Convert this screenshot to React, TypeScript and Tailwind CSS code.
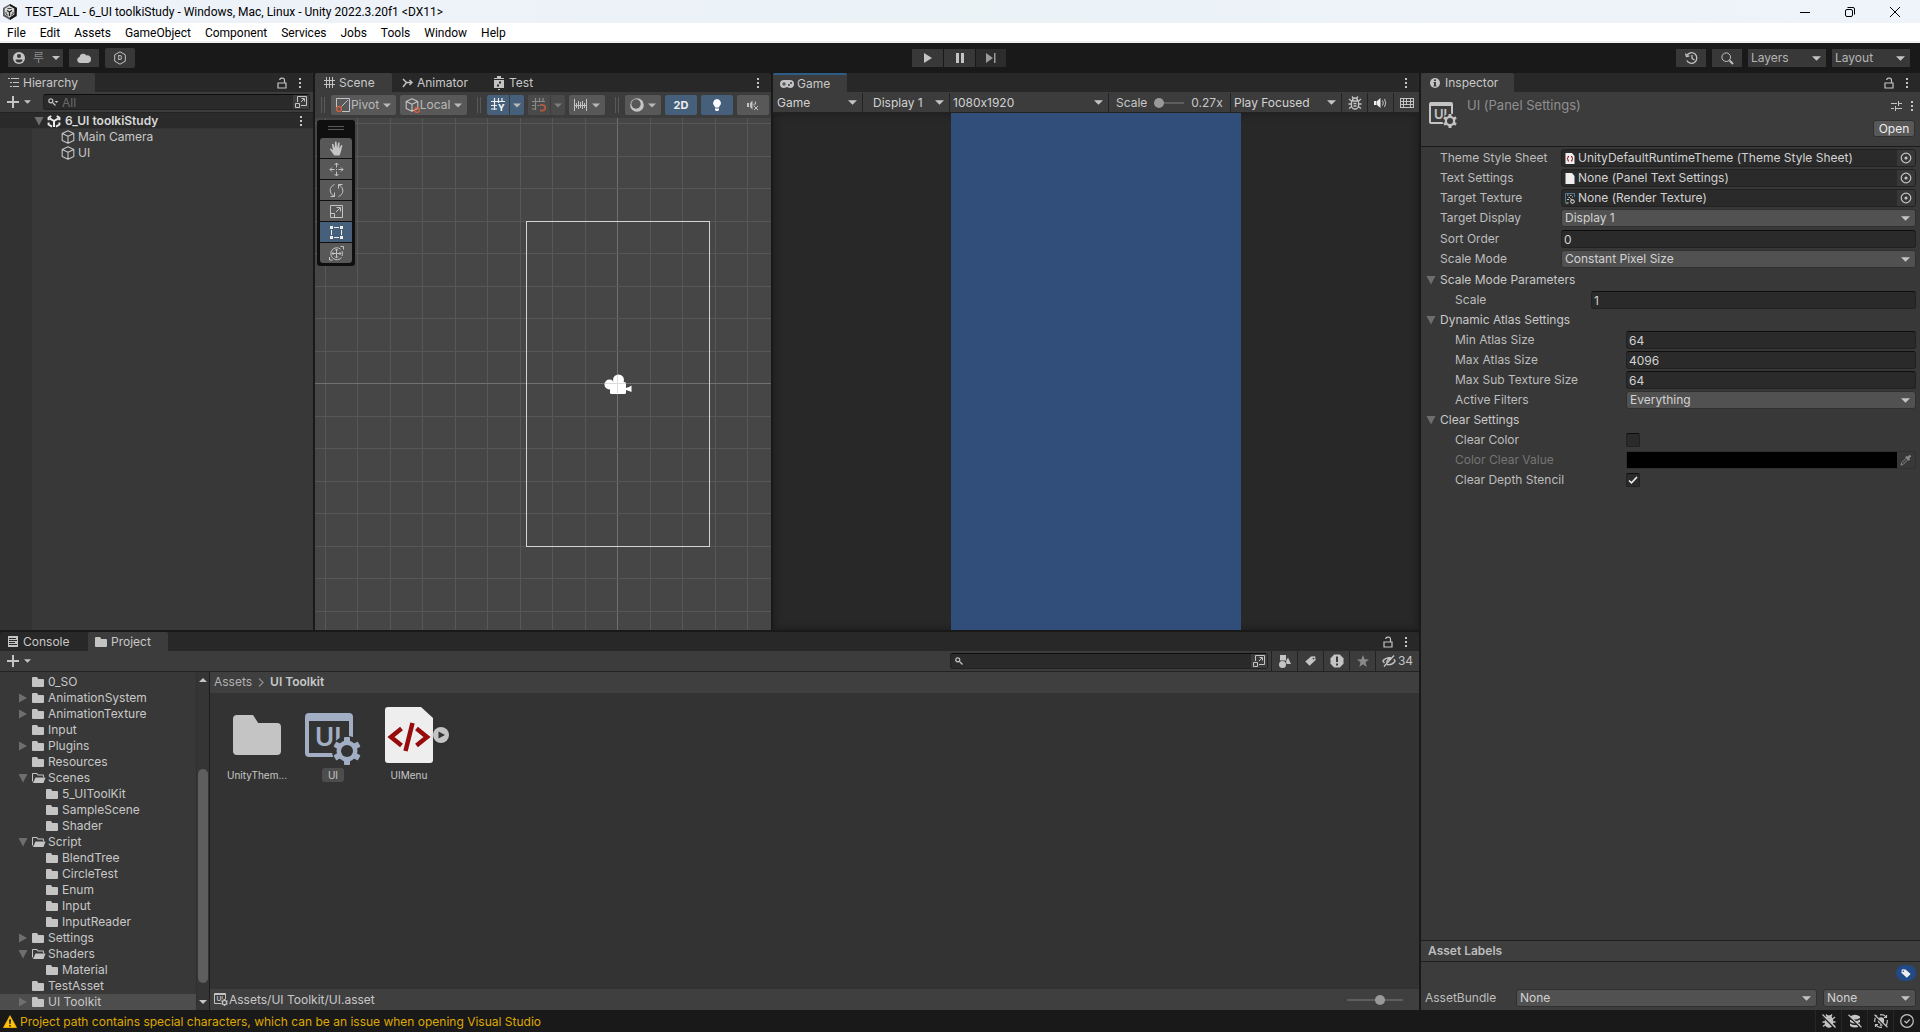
import React, { useState } from 'react'
import clsx from 'clsx'

interface IconProps {
  className?: string
}

interface DropdownProps {
  label?: string
  id?: string
  options: string[]
  className?: string
  selectClassName?: string
}

interface TabProps {
  icon: React.ReactNode
  text: string
  active?: boolean
  className?: string
}

interface TreeItem {
  name: string
  depth: number
  state?: 'open' | 'closed'
}

const menus = [
  'File',
  'Edit',
  'Assets',
  'GameObject',
  'Component',
  'Services',
  'Jobs',
  'Tools',
  'Window',
  'Help',
]

const folders: TreeItem[] = [
  { name: '0_SO', depth: 0 },
  { name: 'AnimationSystem', depth: 0, state: 'closed' },
  { name: 'AnimationTexture', depth: 0, state: 'closed' },
  { name: 'Input', depth: 0 },
  { name: 'Plugins', depth: 0, state: 'closed' },
  { name: 'Resources', depth: 0 },
  { name: 'Scenes', depth: 0, state: 'open' },
  { name: '5_UIToolKit', depth: 1 },
  { name: 'SampleScene', depth: 1 },
  { name: 'Shader', depth: 1 },
  { name: 'Script', depth: 0, state: 'open' },
  { name: 'BlendTree', depth: 1 },
  { name: 'CircleTest', depth: 1 },
  { name: 'Enum', depth: 1 },
  { name: 'Input', depth: 1 },
  { name: 'InputReader', depth: 1 },
  { name: 'Settings', depth: 0, state: 'closed' },
  { name: 'Shaders', depth: 0, state: 'open' },
  { name: 'Material', depth: 1 },
  { name: 'TestAsset', depth: 0 },
  { name: 'UI Toolkit', depth: 0, state: 'closed' },
]

/* ---------- icons ---------- */

function Caret({ className = 'h-1 w-2' }: IconProps) {
  return (
    <svg viewBox="0 0 8 4" className={clsx('shrink-0', className)} fill="currentColor">
      <path d="M0 0h8L4 4z" />
    </svg>
  )
}

function Foldout({ open }: { open: boolean }) {
  return (
    <svg viewBox="0 0 10 10" className="h-[10px] w-[10px] shrink-0 fill-[#6e6e6e]">
      <path d={open ? 'M0.5 1h9L5 9.500z' : 'M1 0.500v9L9 5z'} />
    </svg>
  )
}

function Dots() {
  return (
    <svg viewBox="0 0 4 12" className="h-3 w-1 fill-[#c4c4c4]" shapeRendering="crispEdges">
      <path d="M1 1h2v2H1zM1 5h2v2H1zM1 9h2v2H1z" />
    </svg>
  )
}

function Lock() {
  return (
    <svg viewBox="0 0 10 12" className="h-3 w-[10px]" fill="none" stroke="#c4c4c4" strokeWidth="1.200">
      <path d="M1 6h8v5H1zM7.500 6V3.200A2 2 0 0 0 5.500 1.200h-1A1.800 1.800 0 0 0 2.700 3" />
    </svg>
  )
}

function Plus() {
  return (
    <svg viewBox="0 0 12 12" className="h-3 w-3 fill-[#c4c4c4]" shapeRendering="crispEdges">
      <path d="M5 0h2v5h5v2H7v5H5V7H0V5h5z" />
    </svg>
  )
}

function FolderIcon({ className = 'h-[10px] w-3' }: IconProps) {
  return (
    <svg viewBox="0 0 12 10" className={clsx('shrink-0 fill-[#c4c4c4]', className)}>
      <path d="M0 1a1 1 0 0 1 1-1h4l1.300 2H11a1 1 0 0 1 1 1v6a1 1 0 0 1-1 1H1a1 1 0 0 1-1-1z" />
    </svg>
  )
}

function FolderOpenIcon() {
  return (
    <svg viewBox="0 0 14 10" className="h-[10px] w-[14px] shrink-0 fill-[#c4c4c4]">
      <path d="M0 1a1 1 0 0 1 1-1h4l1.300 1.500H11a1 1 0 0 1 1 1V4h-1V2.500H5.800L4.500 1H1v7L0 9z" />
      <path d="M3.500 4.500H13.500L11.500 10H1z" />
    </svg>
  )
}

function CubeIcon({ className = 'h-[14px] w-[14px]' }: IconProps) {
  return (
    <svg viewBox="0 0 14 14" className={clsx('shrink-0', className)} fill="none" stroke="#c4c4c4" strokeWidth="1.100" strokeLinejoin="round">
      <path d="M7 0.800l5.800 2.700v7L7 13.300 1.200 10.500v-7zM1.200 3.500L7 6.300l5.800-2.800M7 6.300v7" />
    </svg>
  )
}

function UnityIcon() {
  return (
    <svg viewBox="0 0 14 14" className="h-[14px] w-[14px] shrink-0" fill="none" stroke="#ececec" strokeWidth="2">
      <path d="M4.200 2L1.600 3.700v2.500M9.800 2l2.600 1.700v2.500M1.600 8.500v2L5 12.600M12.400 8.500v2L9 12.600" />
      <path d="M7 7v6M7 7L2.500 4.300M7 7l4.500-2.700" />
    </svg>
  )
}

function AppIcon() {
  return (
    <svg viewBox="0 0 16 16" className="h-4 w-4">
      <path d="M8 0l7 4v8l-7 4-7-4V4z" fill="#5a5a5a" />
      <path d="M8 0l7 4-1 8-6 4z" fill="#161616" />
      <path d="M7.500 1.800l4.800 2.700v6L7.500 13.500 2.700 10.500v-6z" fill="#d6d6d6" />
      <path d="M7.500 8v4M7.500 8L5 6.500M7.500 8L10 6.500" stroke="#222" strokeWidth="1.300" />
      <path d="M4 8v2l2 1.300M11 8v2l-2 1.300M5.500 4.500h4" stroke="#444" fill="none" />
    </svg>
  )
}

/* window frame with the two letters and a gear over its lower right corner */
function PanelSettingsIcon({ className, color, back }: { className: string; color: string; back: string }) {
  return (
    <svg viewBox="0 0 56 52" className={clsx('shrink-0', className)}>
      <path
        d="M4 0h40a4 4 0 0 1 4 4v36a4 4 0 0 1-4 4H4a4 4 0 0 1-4-4V4a4 4 0 0 1 4-4zM4 8v32h40V8z"
        fill={color}
        fillRule="evenodd"
      />
      <text x="10" y="33" fontSize="26" fontWeight="600" fontFamily="Inter, sans-serif" fill={color}>
        UI
      </text>
      <g transform="translate(42 38)">
        <circle r="15" fill={back} />
        {[0, 60, 120].map((a) => (
          <rect key={a} x="-3" y="-14" width="6" height="28" rx="1" fill={color} transform={`rotate(${a})`} />
        ))}
        <circle r="10.500" fill={color} />
        <circle r="6" fill={back} />
      </g>
    </svg>
  )
}

function PopOutIcon() {
  return (
    <svg viewBox="0 0 12 12" className="h-3 w-3" fill="none" stroke="#c4c4c4">
      <path d="M2.500 6V0.500h9v9H6M6 6l3-3M6.500 2.500h3v3M0.500 7.500h4v4h-4z" />
    </svg>
  )
}

function TagIcon({ className = 'h-[10px] w-[11px]' }: IconProps) {
  return (
    <svg viewBox="0 0 12 11" className={className} fill="currentColor">
      <path fillRule="evenodd" d="M6.500 0.500L11 0.300l0.700 4.200L5 10.800 0.300 6zM9.300 1.800a1 1 0 1 0 .01 2 1 1 0 0 0 0-2z" />
    </svg>
  )
}

function BugIcon({ off }: { off?: boolean }) {
  return (
    <svg viewBox="0 0 14 14" className="h-[14px] w-[14px]" fill="none" stroke="#c4c4c4" strokeWidth="1.300">
      <path
        d="M4.500 4.500a2.500 2.500 0 0 1 5 0M3.500 5h7v4.500a3.500 3.500 0 0 1-7 0zM3.500 8H0.500M10.500 8h3M3.500 5L1 3M10.500 5L13 3M3.500 10.500L1 12.500M10.500 10.500l2.500 2M4 0.500l1.500 2M10 0.500l-1.500 2M5.500 7.500h3M5.500 10h3"
        fill={off ? '#c4c4c4' : 'none'}
      />
      {off && <path d="M0.500 2l13 13" stroke="#191919" strokeWidth="1.800" />}
      {off && <path d="M0.500 0.500l13 13" />}
    </svg>
  )
}

function TargetIcon() {
  return (
    <svg viewBox="0 0 12 12" className="h-3 w-3" fill="none" stroke="#c4c4c4" strokeWidth="1.200">
      <circle cx="6" cy="6" r="4.800" />
      <circle cx="6" cy="6" r="1.600" fill="#c4c4c4" stroke="none" />
    </svg>
  )
}

/* ---------- shared parts ---------- */

function Dropdown({ label, id, options, className, selectClassName }: DropdownProps) {
  return (
    <div className={clsx('relative flex items-center text-[#d2d2d2]', className)}>
      <select
        id={id}
        aria-label={label}
        className={clsx('h-full w-full appearance-none truncate bg-transparent outline-none', selectClassName)}
      >
        {options.map((o) => (
          <option key={o}>{o}</option>
        ))}
      </select>
      <Caret className="pointer-events-none absolute right-[5px] h-[5px] w-[9px] text-[#c4c4c4]" />
    </div>
  )
}

function Tab({ icon, text, active, className }: TabProps) {
  return (
    <button
      role="tab"
      aria-selected={!!active}
      className={clsx('flex h-full items-center gap-1 whitespace-nowrap', active && 'rounded-t-xs bg-[#3c3c3c]', className)}
    >
      <span className="flex w-3 justify-center">{icon}</span>
      <span className="pt-px">{text}</span>
    </button>
  )
}

function TabBar({ children, lock }: { children: React.ReactNode; lock?: boolean }) {
  return (
    <div className="flex h-[19px] shrink-0 items-center rounded-t-xs bg-[#282828]">
      <div role="tablist" className="flex h-full min-w-0 flex-1">
        {children}
      </div>
      <div className="flex items-center gap-[11px] pr-[11px]">
        {lock && (
          <button aria-label="Lock">
            <Lock />
          </button>
        )}
        <button aria-label="More">
          <Dots />
        </button>
      </div>
    </div>
  )
}

function AddButton() {
  return (
    <button aria-label="Add" className="flex items-center gap-[5px] pl-[7px] text-[#c4c4c4]">
      <Plus />
      <Caret className="h-1 w-[7px]" />
    </button>
  )
}

/* ---------- top bars ---------- */

function TitleBar() {
  return (
    <header className="[font-family:Roboto,'Noto_Sans_CJK_KR',sans-serif]">
      <div className="flex h-[23px] items-center bg-linear-to-r from-[#eef2fa] via-[#ebf3f7] to-[#eff3fa] pl-[2px] text-black">
        <AppIcon />
        <h1 className="flex-1 pl-[7px] pt-px text-[12px]">TEST_ALL - 6_UI toolkiStudy - Windows, Mac, Linux - Unity 2022.3.20f1 &lt;DX11&gt;</h1>
        <div className="flex items-center gap-[35px] pr-5">
          <button aria-label="Minimize">
            <svg viewBox="0 0 10 10" className="h-[10px] w-[10px]" stroke="#000">
              <path d="M0 5.500h10" />
            </svg>
          </button>
          <button aria-label="Restore">
            <svg viewBox="0 0 10 10" className="h-[10px] w-[10px]" fill="none" stroke="#000">
              <rect x="0.500" y="2.500" width="7" height="7" rx="1.500" />
              <path d="M2.500 0.500H8a1.500 1.500 0 0 1 1.500 1.500v5.500" />
            </svg>
          </button>
          <button aria-label="Close">
            <svg viewBox="0 0 10 10" className="h-[10px] w-[10px]" stroke="#000">
              <path d="M0 0l10 10M10 0L0 10" />
            </svg>
          </button>
        </div>
      </div>
      <nav className="flex h-5 items-center gap-[14px] border-b-2 border-[#f0f0f0] bg-white pl-[7px] pt-px text-[12px] text-black">
        {menus.map((m) => (
          <button key={m}>{m}</button>
        ))}
      </nav>
    </header>
  )
}

function MainToolbar() {
  return (
    <div className="flex h-[30px] shrink-0 items-center px-2 text-[#c4c4c4]">
      <div className="flex flex-1 items-center gap-[6px]">
        <button aria-label="Account" className="flex h-[18px] w-[55px] items-center gap-2 bg-[#383838] px-[5px]">
          <svg viewBox="0 0 12 12" className="h-3 w-3 shrink-0">
            <circle cx="6" cy="6" r="6" fill="#c4c4c4" />
            <circle cx="6" cy="4" r="2" fill="#383838" />
            <path d="M2.500 7.500h7a3.500 3 0 0 1-7 0z" fill="#383838" />
          </svg>
          <span className="text-[#8c8c8c]">루</span>
          <Caret />
        </button>
        <button aria-label="Cloud" className="flex h-[18px] w-[30px] items-center justify-center bg-[#383838]">
          <svg viewBox="0 0 14 10" className="h-[10px] w-[14px]" fill="currentColor">
            <path d="M3 10a3 3 0 0 1-.5-5.900A3.800 3.800 0 0 1 9.500 2.500 3.600 3.600 0 0 1 14 6.500 3.500 3.500 0 0 1 11 10z" />
          </svg>
        </button>
        <button aria-label="Packages" className="flex h-5 w-[30px] items-center justify-center rounded-xs bg-[#383838]">
          <svg viewBox="0 0 12 14" className="h-[14px] w-3" fill="none" stroke="currentColor">
            <path d="M6 0.800l5.300 3v6.400L6 13.200 0.700 10.200V3.800z" />
            <text x="3.700" y="9.200" fontSize="6" fontWeight="700" fill="#c4c4c4" stroke="none">
              D
            </text>
          </svg>
        </button>
      </div>
      <div className="flex gap-px">
        <button aria-label="Play" className="flex h-[18px] w-[31px] items-center justify-center bg-[#383838]">
          <svg viewBox="0 0 8 10" className="h-[10px] w-2" fill="#c4c4c4">
            <path d="M0 0l8 5-8 5z" />
          </svg>
        </button>
        <button aria-label="Pause" className="flex h-[18px] w-[31px] items-center justify-center bg-[#383838]">
          <svg viewBox="0 0 8 10" className="h-[10px] w-2" fill="#c4c4c4">
            <path d="M0 0h3v10H0zM5 0h3v10H5z" />
          </svg>
        </button>
        <button aria-label="Step" className="flex h-[18px] w-[30px] items-center justify-center bg-[#2c2c2c]">
          <svg viewBox="0 0 10 10" className="h-[10px] w-[10px]" fill="#9a9a9a">
            <path d="M0 0l7 5-7 5zM8 0h1.500v10H8z" />
          </svg>
        </button>
      </div>
      <div className="flex flex-1 items-center justify-end gap-[6px] pr-[2px]">
        <button aria-label="History" className="flex h-[18px] w-[30px] items-center justify-center bg-[#383838]">
          <svg viewBox="0 0 13 12" className="h-3 w-[13px]" fill="none" stroke="#c4c4c4" strokeWidth="1.300">
            <path d="M2 3.200A5.300 5.300 0 1 1 1.800 8.500M0.500 1.500l1 3 3-0.700M7 3v3.500l2.500 1.500" />
          </svg>
        </button>
        <button aria-label="Search" className="flex h-[18px] w-[30px] items-center justify-center bg-[#383838]">
          <svg viewBox="0 0 13 13" className="h-[13px] w-[13px]" fill="none" stroke="#c4c4c4">
            <circle cx="5.200" cy="5.200" r="4.300" />
            <path d="M8.500 8.500L12 12" strokeWidth="1.800" />
          </svg>
        </button>
        <Dropdown label="Layers" options={['Layers']} className="h-[18px] w-[78px] bg-[#383838]" selectClassName="pl-[3px] text-[#b4b4b4]" />
        <Dropdown label="Layout" options={['Layout']} className="h-[18px] w-[78px] bg-[#383838]" selectClassName="pl-[3px] text-[#b4b4b4]" />
      </div>
    </div>
  )
}

/* ---------- hierarchy ---------- */

function Hierarchy() {
  return (
    <section className="flex min-h-0 flex-col bg-[#383838]">
      <TabBar lock>
        <Tab
          active
          text="Hierarchy"
          className="w-[95px] pl-[7px]"
          icon={
            <svg viewBox="0 0 11 9" className="h-[9px] w-[11px] fill-[#c4c4c4]" shapeRendering="crispEdges">
              <path d="M0 0h2v1H0zM3 0h8v1H3zM2 4h2v1H2zM5 4h6v1H5zM2 8h2v1H2zM5 8h6v1H5z" />
            </svg>
          }
        />
      </TabBar>
      <div className="flex h-[21px] items-center gap-3 border-b border-[#232323] bg-[#3c3c3c] pr-[3px]">
        <AddButton />
        <div className="flex h-4 flex-1 items-center rounded-[3px] border border-[#212121] border-t-[#0d0d0d] bg-[#2a2a2a]">
          <svg viewBox="0 0 11 8" className="ml-1 h-2 w-[11px]" fill="none" stroke="#c4c4c4" strokeWidth="1.200">
            <circle cx="2.800" cy="2.800" r="2" />
            <path d="M4.500 4.500l3 3" />
            <path d="M6.500 3h4L8.500 5z" fill="#c4c4c4" stroke="none" />
          </svg>
          <input aria-label="Search hierarchy" placeholder="All" className="h-full w-full min-w-0 flex-1 bg-transparent pl-[3px] outline-none placeholder:text-[#6a6a6a]" />
          <button aria-label="Open search" className="flex h-full w-4 items-center justify-center bg-[#3c3c3c]">
            <PopOutIcon />
          </button>
        </div>
      </div>
      <div className="flex-1 bg-linear-to-r from-[#323232] from-[32px] to-[#383838] to-[32px]">
        <div className="flex h-4 items-center border-b border-[#333] bg-[#2a2a2a] pl-[34px] pr-[10px] font-semibold text-[#d8d8d8]">
          <Foldout open />
          <span className="ml-[3px] mr-1 flex">
            <UnityIcon />
          </span>
          <span className="flex-1">6_UI toolkiStudy</span>
          <Dots />
        </div>
        {['Main Camera', 'UI'].map((n) => (
          <div key={n} className="flex h-4 items-center gap-[3px] pl-[61px]">
            <CubeIcon />
            {n}
          </div>
        ))}
      </div>
    </section>
  )
}

/* ---------- scene ---------- */

function Handle() {
  return <div className="h-4 w-1 shrink-0 border-x border-[#595959]" />
}

function SceneToolbar() {
  const btn = 'flex h-5 shrink-0 items-center justify-center bg-[#585858]'
  return (
    <div className="flex h-[26px] shrink-0 items-center overflow-hidden bg-[#3c3c3c] pl-[6px] text-[#b9b9b9]">
      <Handle />
      <button className={clsx(btn, 'ml-[6px] w-[65px] gap-1 rounded-xs')}>
        <svg viewBox="0 0 14 14" className="h-[14px] w-[14px]" fill="none" stroke="#c4c4c4">
          <path d="M0.500 9V0.500h13v13H6M5.500 8.500L12 2" />
          <circle cx="3" cy="11" r="2.400" stroke="#e0603c" strokeWidth="1.200" />
        </svg>
        <span className="-ml-[3px]">Pivot</span>
        <Caret className="h-[5px] w-2" />
      </button>
      <button className={clsx(btn, 'ml-1 w-[67px] gap-1 rounded-xs')}>
        <span className="relative">
          <CubeIcon />
          <svg viewBox="0 0 6 6" className="absolute -bottom-px -right-px h-[6px] w-[6px]" fill="none">
            <circle cx="3" cy="3" r="2.400" stroke="#e0603c" strokeWidth="1.200" />
          </svg>
        </span>
        <span className="-ml-[3px]">Local</span>
        <Caret className="h-[5px] w-2" />
      </button>
      <div className="ml-[10px]">
        <Handle />
      </div>
      <button aria-label="Grid" className="ml-[6px] flex h-5 w-[22px] shrink-0 items-center justify-center rounded-l-xs bg-[#46607c]">
        <svg viewBox="0 0 14 14" className="h-[14px] w-[14px]" fill="none" stroke="#eee" strokeWidth="1.200">
          <path d="M3.500 0v12M7.500 0v5M11 0v4M0 3.500h14M0 7.500h6M0 11h6" />
          <text x="7" y="13" fontSize="9" fontWeight="700" fill="#fff" stroke="none">
            Y
          </text>
        </svg>
      </button>
      <button aria-label="Grid options" className="ml-px flex h-5 w-[14px] shrink-0 items-center justify-center rounded-r-xs bg-[#46607c]">
        <Caret className="h-[5px] w-2" />
      </button>
      <button aria-label="Snap" className="ml-1 flex h-5 w-[22px] shrink-0 items-center justify-center rounded-l-xs bg-[#4a4a4a]">
        <svg viewBox="0 0 14 14" className="h-[14px] w-[14px]" fill="none" stroke="#8a8a8a" strokeWidth="1.200">
          <path d="M3.500 0v12M7.500 0v4M11 0v4M0 3.500h13M0 7.500h4M0 11h4M5.500 7.500h2" />
          <path d="M8 7h2.500a2.700 2.700 0 0 1 0 5.500H8" stroke="#a85a42" strokeWidth="2" />
        </svg>
      </button>
      <button aria-label="Snap options" className="ml-px flex h-5 w-[14px] shrink-0 items-center justify-center rounded-r-xs bg-[#4a4a4a] text-[#7c7c7c]">
        <Caret className="h-[5px] w-2" />
      </button>
      <button aria-label="Increment" className={clsx(btn, 'ml-1 w-9 gap-[5px] rounded-xs')}>
        <svg viewBox="0 0 13 12" className="h-3 w-[13px]" stroke="#c4c4c4" shapeRendering="crispEdges">
          <path d="M0.500 0v12M12.500 0v12M2.500 4v5M4.500 2v8M6.500 3v6M8.500 2v8M10.500 4v5M0 6.500h13" />
        </svg>
        <Caret className="h-[5px] w-2" />
      </button>
      <div className="ml-[10px]">
        <Handle />
      </div>
      <button aria-label="Draw mode" className={clsx(btn, 'ml-[6px] w-9 gap-1 rounded-xs')}>
        <svg viewBox="0 0 14 14" className="h-[14px] w-[14px]">
          <circle cx="7" cy="7" r="6.800" fill="#c4c4c4" />
          <circle cx="6" cy="6" r="4.700" fill="#585858" />
        </svg>
        <Caret className="h-[5px] w-2" />
      </button>
      <button className="ml-1 h-5 w-8 shrink-0 rounded-xs bg-[#46607c] text-[11px] font-bold text-[#eee]">2D</button>
      <button aria-label="Lighting" className="ml-1 flex h-5 w-8 shrink-0 items-center justify-center rounded-xs bg-[#46607c]">
        <svg viewBox="0 0 8 12" className="h-3 w-2" fill="#fff">
          <path d="M4 0a4 4 0 0 1 2.500 7L6 8.500H2L1.500 7A4 4 0 0 1 4 0zM2 9.500h4V11L5 12H3l-1-1z" />
        </svg>
      </button>
      <button aria-label="Audio" className={clsx(btn, 'ml-1 w-8 rounded-xs')}>
        <svg viewBox="0 0 12 10" className="h-[10px] w-3" fill="none" stroke="#c4c4c4">
          <path d="M0 3h2v4H0zM3 3l2.500-2.500v9L3 7z" fill="#c4c4c4" stroke="none" />
          <path d="M7 3.500v2M8.500 1.500v3M7 6l4 4M11 6L7 10" />
        </svg>
      </button>
    </div>
  )
}

const toolIcons = [
  {
    name: 'View',
    icon: (
      <path
        d="M5.500 14.500C4 13 2.500 10.500 1 8.500c-.4-.8.500-1.300 1.200-.7L4 9.300 3 3.500c0-1 1.200-1.100 1.500-.2L5.800 7 6 1.300c.1-1 1.400-1 1.600 0L8 7l1.200-5.200c.3-.9 1.500-.7 1.400.3L10.300 7.500l1.700-3c.5-.8 1.600-.3 1.300.6-.8 2.400-1.300 7-2.800 9.400z"
        fill="#c4c4c4"
        stroke="none"
      />
    ),
  },
  {
    name: 'Move',
    icon: <path d="M7.500 1v4.500M7.500 9.500V14M1 7.500h4.500M9.500 7.500H14M5.500 3l2-2 2 2M5.500 12l2 2 2-2M3 5.500l-2 2 2 2M12 5.500l2 2-2 2M7 7.500h1" />,
  },
  {
    name: 'Rotate',
    icon: <path d="M5.500 1.500C2 3 0.500 6 1.500 9c.5 2 2 3.500 4 4.300M9.500 13.500C13 12 14.500 9 13.500 6c-.5-2-2-3.500-4-4.300M1.500 13.500h4v-4M13.500 1.500h-4v4" />,
  },
  {
    name: 'Scale',
    icon: <path d="M1.500 1.500h12v12h-12zM1.500 9.500h4v4M7 8l4-4M7.500 3.500h4v4" />,
  },
  {
    name: 'Rect',
    icon: (
      <g stroke="#eee">
        <path d="M2.500 5v5M12.500 5v5M5 2.500h5M5 12.500h5" />
        <path d="M1 1h3v3H1zM11 1h3v3h-3zM1 11h3v3H1zM11 11h3v3h-3z" fill="#eee" stroke="none" />
      </g>
    ),
  },
  {
    name: 'Transform',
    icon: <path d="M11.500 3a6 6 0 1 0 1 8.500M13 5a6 6 0 0 1 0 5M7.500 3v9M3 7.500h9M6 4.500L7.500 3 9 4.500M6 10.500L7.500 12 9 10.500M4.500 6L3 7.500 4.500 9M10.500 6L12 7.500 10.500 9M11.500 0.500h3v3M0.500 11v3h3" />,
  },
]

function SceneView() {
  const lines = Array.from({ length: 21 }, (_, i) => i - 10)
  return (
    <div className="relative min-h-0 flex-1 overflow-hidden bg-[#464646]">
      {/* grid, camera frame and camera gizmo */}
      <svg viewBox="0 0 456 512" preserveAspectRatio="xMidYMid slice" className="absolute inset-0 h-full w-full">
        <g shapeRendering="crispEdges">
          {lines.map((n) => (
            <rect key={`v${n}`} x={Math.round(302 + n * 32.5)} y="0" width="1" height="512" fill={n === 0 ? '#707070' : '#575757'} />
          ))}
          {lines.map((n) => (
            <rect key={`h${n}`} x="0" y={Math.round(265 + n * 32.5)} width="456" height="1" fill={n === 0 ? '#707070' : '#575757'} />
          ))}
          <rect x="211.500" y="103.500" width="183" height="325" fill="none" stroke="#d4d4d4" />
        </g>
        <g fill="#fff">
          <circle cx="294.500" cy="266.500" r="5" />
          <circle cx="303.500" cy="262" r="5.500" />
          <rect x="295" y="264" width="16" height="12" rx="1.500" />
          <path d="M311 270l3-1 2.500-1.500v6.500L314 273l-3-1z" />
        </g>
        <path d="M302.500 257v18M290 265.500h21" stroke="#dcdcdc" />
      </svg>
      {/* floating tools */}
      <div className="absolute left-[2px] top-[2px] flex w-[38px] flex-col items-center rounded-[3px] bg-[#0f0f0f] pb-[3px]">
        <div className="mt-[6px] mb-2 h-1 w-4 border-y border-[#5a5a5a]" />
        <div className="flex flex-col gap-px overflow-hidden rounded-[3px]">
          {toolIcons.map((t) => (
            <button
              key={t.name}
              aria-label={t.name}
              className={clsx('flex h-5 w-8 items-center justify-center', t.name === 'Rect' ? 'bg-[#46607c]' : 'bg-[#585858]')}
            >
              <svg viewBox="0 0 15 15" className="h-[15px] w-[15px]" fill="none" stroke="#c4c4c4">
                {t.icon}
              </svg>
            </button>
          ))}
        </div>
      </div>
    </div>
  )
}

function Scene() {
  return (
    <section className="flex min-h-0 min-w-0 flex-col">
      <TabBar>
        <Tab
          active
          text="Scene"
          className="w-[77px] pl-2"
          icon={
            <svg viewBox="0 0 11 11" className="h-[11px] w-[11px] shrink-0" stroke="#c4c4c4" shapeRendering="crispEdges">
              <path d="M2.500 0v11M5.500 0v11M8.500 0v11M0 3.500h11M0 7.500h11" />
            </svg>
          }
        />
        <Tab
          text="Animator"
          className="w-[90px] pl-[9px]"
          icon={
            <svg viewBox="0 0 11 10" className="h-[10px] w-[11px] shrink-0" fill="none" stroke="#c4c4c4" strokeWidth="1.400">
              <path d="M1 1l3.500 3.500H10M1 9l3.500-4.500M7.500 2L10 4.500 7.500 7" />
            </svg>
          }
        />
        <Tab
          text="Test"
          className="pl-[11px]"
          icon={
            <svg viewBox="0 0 10 14" className="h-[14px] w-[10px] shrink-0">
              <path d="M3 0h4v2h3v1H0V2h3zM0 4h10v8H0zM4 13h2v1H4z" fill="#c4c4c4" />
              <path d="M5 5.500h2v2H5zM3 8.500h2v2H3z" fill="#282828" />
            </svg>
          }
        />
      </TabBar>
      <SceneToolbar />
      <SceneView />
    </section>
  )
}

/* ---------- game ---------- */

function Game() {
  const cell = 'h-full shrink-0 border-r border-[#232323]'
  return (
    <section className="flex min-h-0 min-w-0 flex-col bg-[#282828]">
      <TabBar>
        <Tab
          active
          text="Game"
          className="w-[74px] border-t-2 border-[#2c5d87] pl-2"
          icon={
            <svg viewBox="0 0 14 8" className="h-2 w-[14px] shrink-0">
              <path d="M4 0h6a4 4 0 0 1 0 8c-1.500 0-2-1-3-1s-1.500 1-3 1a4 4 0 0 1 0-8z" fill="#c4c4c4" />
              <path d="M4 2v4M2 4h4" stroke="#3c3c3c" />
              <circle cx="9" cy="5" r="1" fill="#3c3c3c" />
              <circle cx="11" cy="3" r="1" fill="#3c3c3c" />
            </svg>
          }
        />
      </TabBar>
      <div className="flex h-[21px] shrink-0 items-center overflow-hidden border-b border-[#232323] bg-[#3c3c3c] pt-px">
        <Dropdown label="View" options={['Game', 'Simulator']} className={clsx(cell, 'w-[90px]')} selectClassName="pl-1" />
        <Dropdown label="Display" options={['Display 1', 'Display 2']} className={clsx(cell, 'w-[87px]')} selectClassName="pl-[10px]" />
        <Dropdown label="Resolution" options={['1080x1920', 'Free Aspect']} className="h-full min-w-0 flex-1 border-r border-[#232323]" selectClassName="pl-[3px]" />
        <div className={clsx(cell, 'flex w-[122px] items-center gap-[7px] pl-[7px]')}>
          <label htmlFor="game-scale">Scale</label>
          <input
            id="game-scale"
            type="range"
            min={0}
            max={100}
            defaultValue={0}
            className="h-[10px] w-[30px] appearance-none bg-transparent [&::-webkit-slider-runnable-track]:h-[2px] [&::-webkit-slider-runnable-track]:bg-[#5e5e5e] [&::-webkit-slider-thumb]:-mt-1 [&::-webkit-slider-thumb]:h-[10px] [&::-webkit-slider-thumb]:w-[10px] [&::-webkit-slider-thumb]:appearance-none [&::-webkit-slider-thumb]:rounded-full [&::-webkit-slider-thumb]:bg-[#999]"
          />
          <span>0.27x</span>
        </div>
        <Dropdown label="Play mode" options={['Play Focused', 'Play Maximized']} className={clsx(cell, 'w-[111px]')} selectClassName="pl-[3px]" />
        <button aria-label="Frame debugger" className={clsx(cell, 'flex w-[26px] items-center justify-center')}>
          <BugIcon />
        </button>
        <button aria-label="Mute" className={clsx(cell, 'flex w-[26px] items-center justify-center')}>
          <svg viewBox="0 0 13 10" className="h-[10px] w-[13px]" fill="none" stroke="#c4c4c4">
            <path d="M0 3h2.500v4H0zM3 3l3.500-3v10L3 7z" fill="#eee" stroke="none" />
            <path d="M8.500 2.500q1.500 2.500 0 5M10.500 1q2.500 4 0 8" />
          </svg>
        </button>
        <button aria-label="Shortcuts" className="flex h-full w-[25px] shrink-0 items-center justify-center">
          <svg viewBox="0 0 14 10" className="h-[10px] w-[14px]" fill="none" stroke="#c4c4c4" shapeRendering="crispEdges">
            <path d="M0.500 0.500h13v9h-13zM0 3.500h14M0 6.500h14M3.500 0v6M6.500 0v6M10.500 0v6M3.500 7v3M10.500 7v3" />
          </svg>
        </button>
      </div>
      <div className="flex min-h-0 flex-1 justify-center shadow-[inset_0_0_8px_#1a1a1a]">
        <div className="aspect-[1080/1920] h-full bg-[#314d79]" />
      </div>
    </section>
  )
}

/* ---------- project ---------- */

function FolderTree() {
  const [selected, setSelected] = useState(folders.length - 1)
  return (
    <div className="flex w-[210px] shrink-0 border-r border-[#1c1c1c] bg-[#383838]">
      <ul className="flex-1 overflow-hidden pt-[2px]">
        {folders.map((f, i) => (
          <li key={i}>
            <button
              onClick={() => setSelected(i)}
              className={clsx('flex h-4 w-full items-center', f.depth ? 'pl-8' : 'pl-[18px]', selected === i && 'bg-[#4d4d4d]')}
            >
              <span className="flex w-[14px]">{f.state && <Foldout open={f.state === 'open'} />}</span>
              <span className="flex w-4">{f.state === 'open' ? <FolderOpenIcon /> : <FolderIcon />}</span>
              {f.name}
            </button>
          </li>
        ))}
      </ul>
      <div className="flex w-[13px] flex-col items-center border-l border-[#303030] bg-[#353535] py-[6px] text-[#c4c4c4]">
        <Caret className="h-1 w-2 rotate-180" />
        <div className="flex flex-1 flex-col py-1">
          <div className="flex-[82]" />
          <div className="w-[10px] flex-[213] rounded-full bg-[#5e5e5e]" />
          <div className="flex-[13]" />
        </div>
        <Caret className="h-1 w-2" />
      </div>
    </div>
  )
}

function AssetGrid() {
  return (
    <div className="flex flex-1 items-start gap-3 bg-[#333] pl-[15px] pt-3 text-[10px]">
      <button className="flex w-16 flex-col items-center gap-[3px]">
        <span className="flex h-[60px] items-center">
          <FolderIcon className="h-10 w-12" />
        </span>
        <span className="h-[14px] leading-[14px]">UnityThem...</span>
      </button>
      <button className="flex w-16 flex-col items-center gap-[3px]">
        <span className="flex h-[60px] items-end">
          <PanelSettingsIcon className="h-[52px] w-14" color="#a2aec4" back="#333" />
        </span>
        <span className="h-[14px] rounded-[3px] bg-[#4d4d4d] px-[6px] leading-[14px]">UI</span>
      </button>
      <button className="relative flex w-16 flex-col items-center gap-[3px]">
        <span className="flex h-[60px] items-center">
          <svg viewBox="0 0 48 56" className="h-14 w-12">
            <path d="M3 0h33l12 11v42a3 3 0 0 1-3 3H3a3 3 0 0 1-3-3V3a3 3 0 0 1 3-3z" fill="#eee" />
            <g fill="none" stroke="#960c0c" strokeWidth="4.500">
              <path d="M16.500 21.500L6 30l10.500 8.500M31.500 21.500L42 30l-10.500 8.500M27.500 16L20.500 44" />
            </g>
          </svg>
        </span>
        <span className="h-[14px] leading-[14px]">UIMenu</span>
        <svg viewBox="0 0 16 16" className="absolute -right-2 top-[22px] h-4 w-4 drop-shadow-sm">
          <circle cx="8" cy="8" r="8" fill="#c4c4c4" />
          <path d="M5.500 4.500L12 8l-6.500 3.500z" fill="#333" />
        </svg>
      </button>
    </div>
  )
}

function Project() {
  const cell = 'flex h-full w-[26px] shrink-0 items-center justify-center border-l border-[#232323]'
  return (
    <section className="flex shrink-0 flex-col">
      <TabBar lock>
        <Tab
          text="Console"
          className="w-[88px] pl-[7px]"
          icon={
            <svg viewBox="0 0 10 11" className="h-[11px] w-[10px] shrink-0">
              <path d="M0 0h10v11H0z" fill="#c4c4c4" />
              <path d="M1 2.500h7M1 4.500h8M1 6.500h6M1 8.500h8" stroke="#282828" />
            </svg>
          }
        />
        <Tab active text="Project" className="w-20 pl-[7px]" icon={<FolderIcon />} />
      </TabBar>
      <div className="flex h-[21px] shrink-0 items-center border-b border-[#232323] bg-[#3c3c3c] text-[#c4c4c4]">
        <AddButton />
        <div className="ml-auto mr-[3px] flex h-4 w-[318px] items-center rounded-[3px] border border-[#212121] border-t-[#0d0d0d] bg-[#2a2a2a]">
          <svg viewBox="0 0 8 8" className="ml-1 h-2 w-2" fill="none" stroke="#c4c4c4" strokeWidth="1.200">
            <circle cx="2.800" cy="2.800" r="2" />
            <path d="M4.500 4.500l3 3" />
          </svg>
          <input aria-label="Search assets" className="h-full w-full min-w-0 flex-1 bg-transparent px-1 outline-none" />
          <button aria-label="Open search" className="flex h-full w-4 items-center justify-center bg-[#3c3c3c]">
            <PopOutIcon />
          </button>
        </div>
        <button aria-label="Search by type" className={cell}>
          <svg viewBox="0 0 12 13" className="h-[13px] w-3" fill="currentColor">
            <path d="M1 0h6v5.500H1zM9 2.500l3 6.500H7.500L7 6z" />
            <circle cx="3.500" cy="9.500" r="3.500" />
          </svg>
        </button>
        <button aria-label="Search by label" className={cell}>
          <TagIcon />
        </button>
        <button aria-label="Search by log" className={cell}>
          <svg viewBox="0 0 14 14" className="h-[14px] w-[14px]">
            <path d="M4.200 0.500h5.600l3.700 3.700v5.600l-3.700 3.700H4.200L0.500 9.800V4.200z" fill="#c4c4c4" />
            <path d="M6 2.500h2v5.500H6zM6 9.500h2v2H6z" fill="#3c3c3c" />
          </svg>
        </button>
        <button aria-label="Favorites" className={cell}>
          <svg viewBox="0 0 12 12" className="h-3 w-3 fill-[#8a8a8a]">
            <path d="M6 0l1.600 4.200 4.400.2-3.500 2.800L9.700 12 6 9.200 2.300 12l1.200-4.800L0 4.400l4.400-.2z" />
          </svg>
        </button>
        <button className="flex h-full w-11 shrink-0 items-center justify-center gap-[2px] border-l border-[#232323]">
          <svg viewBox="0 0 14 12" className="h-3 w-[14px]" fill="none" stroke="currentColor" strokeWidth="1.300">
            <path d="M0.700 6Q4 2 9 2.700M13.300 6Q10 10.500 5 9.500M13.300 6l-1.500-1.700M0.700 6l1.800 2M5 8a3 3 0 0 1 3.500-4M12 0.500L2 11.500" />
          </svg>
          34
        </button>
      </div>
      <div className="flex">
        <FolderTree />
        <div className="flex min-w-0 flex-1 flex-col">
          <nav className="flex h-[21px] items-center bg-[#3f3f3f] pb-px pl-1">
            <a href="#assets" className="text-[#b2b2b2]">
              Assets
            </a>
            <svg viewBox="0 0 6 9" className="mx-[6px] h-[9px] w-[6px]" fill="none" stroke="#8a8a8a" strokeWidth="1.300">
              <path d="M1 0.500l4 4-4 4" />
            </svg>
            <a href="#ui-toolkit" className="font-semibold">
              UI Toolkit
            </a>
          </nav>
          <AssetGrid />
          <div className="flex h-[21px] items-center gap-px bg-[#3f3f3f] pl-1 pr-4">
            <PanelSettingsIcon className="h-[13px] w-[14px]" color="#c4c4c4" back="#3f3f3f" />
            <span className="flex-1">Assets/UI Toolkit/UI.asset</span>
            <input
              type="range"
              aria-label="Icon size"
              min={0}
              max={100}
              defaultValue={60}
              className="h-[10px] w-14 appearance-none bg-transparent [&::-webkit-slider-runnable-track]:h-[2px] [&::-webkit-slider-runnable-track]:bg-[#5e5e5e] [&::-webkit-slider-thumb]:-mt-1 [&::-webkit-slider-thumb]:h-[10px] [&::-webkit-slider-thumb]:w-[10px] [&::-webkit-slider-thumb]:appearance-none [&::-webkit-slider-thumb]:rounded-full [&::-webkit-slider-thumb]:bg-[#999]"
            />
          </div>
        </div>
      </div>
    </section>
  )
}

/* ---------- inspector ---------- */

interface RowProps {
  label: string
  id: string
  level?: 'root' | 'scale' | 'nested'
  disabled?: boolean
  children: React.ReactNode
}

function Row({ label, id, level = 'root', disabled, children }: RowProps) {
  return (
    <div className="flex h-[18px] items-center">
      <label
        htmlFor={id}
        className={clsx(
          'shrink-0',
          level === 'root' && 'w-[140px] pl-[19px]',
          level === 'scale' && 'w-[170px] pl-[34px]',
          level === 'nested' && 'w-[205px] pl-[34px]',
          disabled ? 'text-[#757575]' : 'text-[#bdbdbd]'
        )}
      >
        {label}
      </label>
      {children}
    </div>
  )
}

function TextInput({ id, value }: { id: string; value: string }) {
  return (
    <input
      id={id}
      defaultValue={value}
      className="h-[18px] min-w-0 flex-1 rounded-[3px] border border-[#212121] border-t-[#0d0d0d] bg-[#2a2a2a] pl-[2px] text-[#d2d2d2] outline-none"
    />
  )
}

function ObjectField({ id, value, icon }: { id: string; value: string; icon: React.ReactNode }) {
  return (
    <div className="flex h-[18px] min-w-0 flex-1 items-center rounded-[3px] border border-[#212121] bg-[#2a2a2a] pl-[3px]">
      <svg viewBox="0 0 10 11" className="h-[11px] w-[10px] shrink-0">
        {icon}
      </svg>
      <input id={id} readOnly value={value} className="min-w-0 flex-1 truncate bg-transparent pl-[3px] text-[#d2d2d2] outline-none" />
      <button aria-label="Select object" className="flex h-full w-[18px] items-center justify-center rounded-r-[2px] bg-[#373737]">
        <TargetIcon />
      </button>
    </div>
  )
}

function FoldoutRow({ text }: { text: string }) {
  return (
    <button className="flex h-[18px] items-center gap-1 pl-[5px]">
      <Foldout open />
      {text}
    </button>
  )
}

function Checkbox({ id, checked }: { id: string; checked?: boolean }) {
  return (
    <span className="relative flex">
      <input
        id={id}
        type="checkbox"
        defaultChecked={checked}
        className="peer h-[14px] w-[14px] appearance-none rounded-[2px] border border-[#212121] border-t-[#0d0d0d] bg-[#2a2a2a]"
      />
      <svg viewBox="0 0 14 14" className="pointer-events-none absolute hidden h-[14px] w-[14px] peer-checked:block" fill="none" stroke="#eee" strokeWidth="1.600">
        <path d="M3 7.500l2.500 2.300L11 4" />
      </svg>
    </span>
  )
}

const selectBox = 'h-[18px] min-w-0 rounded-[3px] border border-[#303030] bg-[#515151]'
const page = 'M0.500 0h6.500l2.500 3v8h-9z'

function Inspector() {
  return (
    <section className="flex min-h-0 flex-col bg-[#383838]">
      <TabBar lock>
        <Tab
          active
          text="Inspector"
          className="w-[93px] pl-2"
          icon={
            <svg viewBox="0 0 10 10" className="h-[10px] w-[10px] shrink-0">
              <circle cx="5" cy="5" r="5" fill="#c4c4c4" />
              <path d="M4 1.500h2v1.500H4zM3.500 4H6v3.500h.5V8.500h-3v-1H4V5h-.5z" fill="#3c3c3c" />
            </svg>
          }
        />
      </TabBar>
      <div className="flex h-[55px] shrink-0 border-b border-[#1a1a1a] bg-[#3c3c3c] pl-2 pr-[5px]">
        <PanelSettingsIcon className="mt-[10px] h-[26px] w-7" color="#c4c4c4" back="#3c3c3c" />
        <h2 className="flex-1 pl-[10px] pt-[5px] text-[13px] text-[#8f8f8f]">UI (Panel Settings)</h2>
        <div className="flex flex-col items-end">
          <div className="flex h-7 items-center gap-2 pr-px">
            <button aria-label="Presets">
              <svg viewBox="0 0 11 10" className="h-[10px] w-[11px]" stroke="#c4c4c4" shapeRendering="crispEdges">
                <path d="M0 2.500h6M8 2.500h3M7.500 0v5M0 7.500h3M5 7.500h6M4.500 5v5" />
              </svg>
            </button>
            <button aria-label="More">
              <Dots />
            </button>
          </div>
          <button className="h-[17px] w-[42px] rounded-[3px] border border-[#303030] bg-[#585858] leading-[15px] text-[#eee]">Open</button>
        </div>
      </div>
      <form className="flex flex-1 flex-col gap-[3px] pr-1 pt-[2px]">
        <div className="flex flex-col gap-[2px]">
          <Row label="Theme Style Sheet" id="theme">
            <ObjectField
              id="theme"
              value="UnityDefaultRuntimeTheme (Theme Style Sheet)"
              icon={
                <>
                  <path d={page} fill="#eee" />
                  <path d="M4 3.500H3V5l-1 .700 1 .700V8h1M6 3.500h1V5l1 .700-1 .700V8H6" stroke="#a01010" fill="none" />
                </>
              }
            />
          </Row>
          <Row label="Text Settings" id="text-settings">
            <ObjectField id="text-settings" value="None (Panel Text Settings)" icon={<path d={page} fill="#eee" />} />
          </Row>
          <Row label="Target Texture" id="texture">
            <ObjectField
              id="texture"
              value="None (Render Texture)"
              icon={
                <g fill="none">
                  <path d="M0.500 9V0.500h9V4" stroke="#4d7f9c" />
                  <path d="M2 2h1.500M5 2.500h1.500M3.500 4.500H5M2 6.500h2M7 4h1M0.500 10h3" stroke="#c4c4c4" />
                  <path d="M5 5.500l2.500 2" stroke="#c4c4c4" />
                  <circle cx="7.500" cy="8.500" r="1.800" stroke="#eee" />
                </g>
              }
            />
          </Row>
          <Row label="Target Display" id="target-display">
            <Dropdown id="target-display" options={['Display 1', 'Display 2']} className={clsx(selectBox, 'flex-1')} selectClassName="pl-[3px]" />
          </Row>
        </div>
        <div className="flex flex-col gap-[2px]">
          <Row label="Sort Order" id="sort-order">
            <TextInput id="sort-order" value="0" />
          </Row>
          <Row label="Scale Mode" id="scale-mode">
            <Dropdown id="scale-mode" options={['Constant Pixel Size', 'Scale With Screen Size']} className={clsx(selectBox, 'flex-1')} selectClassName="pl-[3px]" />
          </Row>
        </div>
        <div className="flex flex-col gap-[2px]">
          <FoldoutRow text="Scale Mode Parameters" />
          <Row label="Scale" id="scale" level="scale">
            <TextInput id="scale" value="1" />
          </Row>
          <FoldoutRow text="Dynamic Atlas Settings" />
          <Row label="Min Atlas Size" id="min-atlas" level="nested">
            <TextInput id="min-atlas" value="64" />
          </Row>
          <Row label="Max Atlas Size" id="max-atlas" level="nested">
            <TextInput id="max-atlas" value="4096" />
          </Row>
          <Row label="Max Sub Texture Size" id="max-sub" level="nested">
            <TextInput id="max-sub" value="64" />
          </Row>
          <Row label="Active Filters" id="filters" level="nested">
            <Dropdown id="filters" options={['Everything', 'Nothing']} className={clsx(selectBox, 'flex-1')} selectClassName="pl-[3px]" />
          </Row>
          <FoldoutRow text="Clear Settings" />
          <Row label="Clear Color" id="clear-color" level="nested">
            <Checkbox id="clear-color" />
          </Row>
          <Row label="Color Clear Value" id="clear-value" level="nested" disabled>
            <div className="flex h-[18px] min-w-0 flex-1 items-center rounded-[3px] border border-[#303030]">
              <input
                id="clear-value"
                type="color"
                defaultValue="#000000"
                disabled
                className="h-4 min-w-0 flex-1 appearance-none bg-black [&::-webkit-color-swatch-wrapper]:p-0 [&::-webkit-color-swatch]:border-0"
              />
              <button aria-label="Pick color" disabled className="flex w-[18px] justify-center">
                <svg viewBox="0 0 12 12" className="h-3 w-3" fill="none" stroke="#8a8a8a">
                  <path d="M1 11l.5-2L7 3.500 8.500 5 3 10.500z" />
                  <path d="M6 2.500L9.500 6M8 4l2.500-2.500" strokeWidth="2.200" />
                </svg>
              </button>
            </div>
          </Row>
          <Row label="Clear Depth Stencil" id="clear-depth" level="nested">
            <Checkbox id="clear-depth" checked />
          </Row>
        </div>
      </form>
      <h3 className="flex h-[22px] shrink-0 items-center border-y border-[#1f1f1f] bg-[#3e3e3e] pl-[7px] font-semibold text-[#bdbdbd]">Asset Labels</h3>
      <div className="flex h-12 shrink-0 flex-col items-end gap-2 bg-[#3c3c3c] pr-1 pt-[3px]">
        <button aria-label="Add label" className="flex h-4 w-5 items-center justify-center rounded-full bg-[#214a87] text-[#eee]">
          <TagIcon className="h-[9px] w-[10px] -scale-x-100" />
        </button>
        <div className="flex w-full items-center pl-1">
          <label htmlFor="bundle" className="w-[91px] shrink-0 text-[#bdbdbd]">
            AssetBundle
          </label>
          <Dropdown id="bundle" options={['None']} className={clsx(selectBox, 'flex-1')} selectClassName="pl-[3px]" />
          <Dropdown label="Variant" options={['None']} className={clsx(selectBox, 'ml-[6px] w-[93px]')} selectClassName="pl-[3px]" />
        </div>
      </div>
    </section>
  )
}

/* ---------- status bar ---------- */

function StatusBar() {
  const cell = 'flex h-full w-[26px] items-center justify-center border-l border-[#262626]'
  return (
    <footer className="flex h-[22px] shrink-0 items-center bg-[#191919] pl-[3px] pr-px">
      <svg viewBox="0 0 14 13" className="h-[13px] w-[14px]">
        <path d="M7 0.500L13.700 12.700H0.300z" fill="#ffc107" stroke="#ffc107" strokeLinejoin="round" strokeWidth="0.500" />
        <path d="M6 4.500h2L7.600 9H6.400zM6.200 10h1.600v1.600H6.200z" fill="#191919" />
      </svg>
      <p className="flex-1 truncate pl-[3px] pt-px text-[#dfa800]">
        Project path contains special characters, which can be an issue when opening Visual Studio
      </p>
      <button aria-label="Debugger" className={cell}>
        <BugIcon off />
      </button>
      <button aria-label="Cache server" className={cell}>
        <svg viewBox="0 0 14 14" className="h-[14px] w-[14px]">
          <g fill="#c4c4c4">
            <path d="M2 2.500q5-3.500 10 0V4q-5 3-10 0zM2 5.500q5 3 10 0V8q-5 3-10 0zM2 9.500q5 3 10 0V12q-5 3-10 0z" />
          </g>
          <path d="M0.500 2l13 12.500" stroke="#191919" strokeWidth="1.800" />
          <path d="M0.500 0.800l13 12.500" stroke="#c4c4c4" strokeWidth="1.200" />
        </svg>
      </button>
      <button aria-label="Auto refresh" className={cell}>
        <svg viewBox="0 0 14 14" className="h-[14px] w-[14px]" fill="none" stroke="#c4c4c4" strokeWidth="1.200">
          <path d="M3 1.500C1 3 0.500 5 0.700 8M11 12.500c2-1.500 2.500-3.500 2.300-6.500M6 0.800q4-.8 6 2.200M8 13.200q-4 .8-6-2.200M12.500 1v2.500H10M1.500 13v-2.500H4" />
          <circle cx="7" cy="6.500" r="3.200" fill="#c4c4c4" stroke="none" />
          <path d="M6 11h2.500" strokeWidth="1.500" />
          <path d="M0.500 2l13 12.500" stroke="#191919" strokeWidth="1.500" />
          <path d="M0.500 0.800l13 12.500" />
        </svg>
      </button>
      <button aria-label="Progress" className={cell}>
        <svg viewBox="0 0 14 14" className="h-[14px] w-[14px]" fill="none" stroke="#c4c4c4" strokeWidth="1.200">
          <circle cx="7" cy="7" r="6.300" />
          <path d="M4.500 7l2 1.800L9.700 5.500" />
        </svg>
      </button>
    </footer>
  )
}

export default function App() {
  return (
    <div className="flex h-screen flex-col bg-[#191919] text-[12px] leading-4 text-[#c8c8c8] [font-family:Inter,'Noto_Sans_CJK_KR',sans-serif] [font-feature-settings:'calt'_0]">
      <TitleBar />
      <MainToolbar />
      <main className="grid min-h-0 flex-1 grid-cols-[minmax(0,1419fr)_minmax(0,499fr)] gap-[2px]">
        <div className="flex min-h-0 flex-col gap-[2px]">
          <div className="grid min-h-0 flex-1 grid-cols-[minmax(0,313fr)_minmax(0,456fr)_minmax(0,646fr)] grid-rows-[minmax(0,1fr)] gap-[2px]">
            <Hierarchy />
            <Scene />
            <Game />
          </div>
          <Project />
        </div>
        <Inspector />
      </main>
      <StatusBar />
    </div>
  )
}
